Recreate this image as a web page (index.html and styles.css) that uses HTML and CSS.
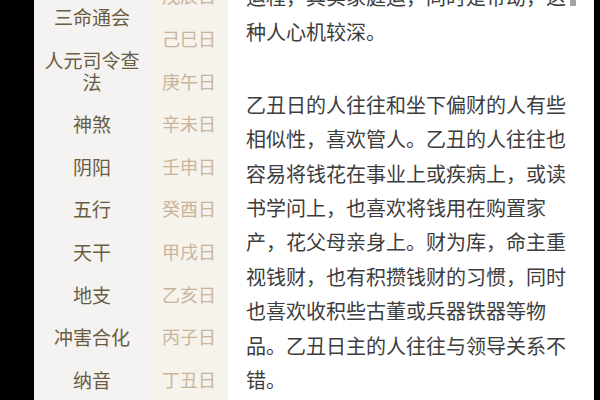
FILE: index.html
```html
<!DOCTYPE html>
<html lang="zh-CN">
<head>
<meta charset="utf-8">
<link rel="stylesheet" href="styles.css">
</head>
<body>
<div class="screen">
  <ul class="cats">
    <li>三命通会</li>
    <li>人元司令查法</li>
    <li>神煞</li>
    <li>阴阳</li>
    <li>五行</li>
    <li>天干</li>
    <li>地支</li>
    <li>冲害合化</li>
    <li>纳音</li>
  </ul>
  <ul class="days">
    <li>戊辰日</li>
    <li>己巳日</li>
    <li>庚午日</li>
    <li>辛未日</li>
    <li>壬申日</li>
    <li>癸酉日</li>
    <li>甲戌日</li>
    <li>乙亥日</li>
    <li>丙子日</li>
    <li>丁丑日</li>
  </ul>
  <div class="article">
    <span class="thumb"></span>
    <p>运程，其实家庭运，同时是带劫，这种人心机较深。</p>
    <p>乙丑日的人往往和坐下偏财的人有些相似性，喜欢管人。乙丑的人往往也容易将钱花在事业上或疾病上，或读书学问上，也喜欢将钱用在购置家产，花父母亲身上。财为库，命主重视钱财，也有积攒钱财的习惯，同时也喜欢收积些古董或兵器铁器等物品。乙丑日主的人往往与领导关系不错。</p>
  </div>
</div>
</body>
</html>
```

FILE: styles.css
```css
html, body {
  margin: 0;
  padding: 0;
  background: #000;
  width: 600px;
  height: 400px;
  overflow: hidden;
}

.screen {
  display: flex;
  height: 400px;
  padding-left: 34px;
  padding-right: 6px;
  font-family: "Noto Sans CJK SC", "Noto Sans", sans-serif;
  overflow: hidden;
}

.cats, .days {
  list-style: none;
  margin: 0;
  padding: 0;
  text-align: center;
  flex: none;
}

.cats {
  width: 116px;
  background: #f4f3f1;
  color: #6a5c43;
  font-size: 19px;
  line-height: 22px;
}

.cats li {
  padding: 10.3px 8px;
}

.cats li:first-child {
  margin-top: -4.3px;
}

.days {
  width: 78px;
  background: #f6f2ec;
  color: #c9b59c;
  font-size: 18px;
  line-height: 22px;
}

.days li {
  padding: 10.3px 0;
}

.days li:first-child {
  margin-top: -25.9px;
}

.article {
  position: relative;
  flex: 1;
  background: #fff;
  padding: 0 20px 0 18px;
  color: #3d3d3d;
  font-size: 20px;
  line-height: 34.4px;
}

.article p {
  margin: 0 0 38.6px;
}

.article p:first-of-type {
  margin-top: -19.6px;
}

.thumb {
  position: absolute;
  top: 0;
  left: 342px;
  width: 6px;
  height: 6px;
  background: #a3a3a3;
}
```
